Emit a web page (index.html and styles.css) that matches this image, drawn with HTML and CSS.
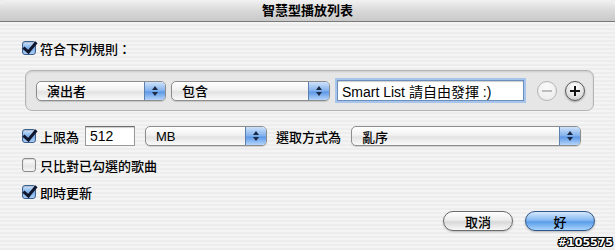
FILE: index.html
```html
<!DOCTYPE html>
<html lang="zh-Hant">
<head>
    <meta charset="UTF-8">
    <title>智慧型播放列表</title>
    <link rel="stylesheet" href="styles.css">
</head>
<body>
    <div id="dialog">
        <div class="titlebar">智慧型播放列表</div>
        <div class="content">
            <div class="row first">
                <span class="check on"></span>
                <span class="label">符合下列規則：</span>
            </div>

            <div class="rulebox">
                <div class="popup w-field">
                    <span>演出者</span><span class="stepper"></span>
                </div>
                <div class="popup w-op">
                    <span>包含</span><span class="stepper"></span>
                </div>
                <input type="text" class="field focus" value="Smart List 請自由發揮 :)">
                <span class="round minus dim"></span>
                <span class="round plus"></span>
            </div>

            <div class="row limit">
                <span class="check on"></span>
                <span class="label">上限為</span>
                <input type="text" class="field num" value="512">
                <div class="popup w-unit">
                    <span>MB</span><span class="stepper"></span>
                </div>
                <span class="label pick">選取方式為</span>
                <div class="popup w-order">
                    <span>亂序</span><span class="stepper"></span>
                </div>
            </div>

            <div class="row only">
                <span class="check"></span>
                <span class="label">只比對已勾選的歌曲</span>
            </div>

            <div class="row live">
                <span class="check on"></span>
                <span class="label">即時更新</span>
            </div>

            <div class="buttons">
                <button class="btn">取消</button>
                <button class="btn default">好</button>
            </div>
        </div>
        <div class="stamp">#105575</div>
    </div>
</body>
</html>
```

FILE: styles.css
```css
* {
    box-sizing: border-box;
}

body {
    margin: 0;
    font-family: "Liberation Sans", "Noto Sans CJK TC", sans-serif;
    font-size: 13px;
    color: #000;
}

#dialog {
    position: relative;
    width: 615px;
    height: 250px;
    overflow: hidden;
    background: repeating-linear-gradient(to bottom, #ededed 0, #ededed 2px, #f4f4f4 2px, #f4f4f4 4px);
}

.titlebar {
    height: 22px;
    line-height: 21px;
    text-align: center;
    font-weight: bold;
    font-size: 13px;
    background: linear-gradient(to bottom, #f2f2f2, #d9d9d9 50%, #c9c9c9);
    border-bottom: 1px solid #7a7a7a;
    border-radius: 5px 5px 0 0;
}

.content {
    padding: 0 20px 0 22px;
}

.row {
    display: flex;
    align-items: center;
    height: 18px;
}

.row.first {
    margin-top: 17px;
}

.label {
    margin-left: 4px;
    font-weight: 500;
    white-space: nowrap;
}

.check {
    width: 14px;
    height: 14px;
    flex: none;
    border: 1px solid #8a8a8a;
    border-radius: 3px;
    background: linear-gradient(to bottom, #ffffff, #e6e6e6 60%, #f6f6f6);
    box-shadow: inset 0 1px 1px rgba(0, 0, 0, 0.15);
    position: relative;
}

.check.on {
    border-color: #3c5f8d;
    background: linear-gradient(to bottom, #d4e5fa, #7eaee8 50%, #a8ccf4);
}

.check.on::after {
    content: "";
    position: absolute;
    left: 3px;
    top: -3px;
    width: 5px;
    height: 11px;
    border: solid #101830;
    border-width: 0 3px 3px 0;
    transform: rotate(40deg);
}

.rulebox {
    display: flex;
    align-items: center;
    margin: 13px 0 0 3px;
    width: 569px;
    height: 41px;
    padding-left: 10px;
    border: 1px solid #b4b4b4;
    border-radius: 7px;
    background: #e6e6e6;
    box-shadow: inset 0 1px 2px rgba(0, 0, 0, 0.12);
}

.popup {
    display: flex;
    align-items: center;
    justify-content: space-between;
    height: 20px;
    padding-left: 10px;
    border: 1px solid #8d8d8d;
    border-radius: 5px;
    background: linear-gradient(to bottom, #ffffff, #f1f1f1 45%, #e2e2e2 55%, #fafafa);
    box-shadow: 0 1px 1px rgba(0, 0, 0, 0.15);
    font-weight: 500;
    overflow: hidden;
}

.stepper {
    position: relative;
    width: 21px;
    height: 18px;
    border-left: 1px solid #5c7fae;
    background: linear-gradient(to bottom, #cfe2fb, #7fb0ec 50%, #5b97e6 55%, #b6d5fa);
}

.stepper::before,
.stepper::after {
    content: "";
    position: absolute;
    left: 7px;
    border-left: 3px solid transparent;
    border-right: 3px solid transparent;
}

.stepper::before {
    top: 4px;
    border-bottom: 4px solid #1a2a44;
}

.stepper::after {
    top: 10px;
    border-top: 4px solid #1a2a44;
}

.w-field {
    width: 130px;
}

.w-op {
    width: 159px;
    margin-left: 5px;
}

.field {
    height: 21px;
    padding: 0 4px;
    border: 1px solid #9a9a9a;
    border-top-color: #6f6f6f;
    background: #fff;
    font-family: "Liberation Sans", "Noto Sans CJK TC", sans-serif;
    font-size: 14px;
    color: #000;
    outline: none;
    box-shadow: inset 0 1px 1px rgba(0, 0, 0, 0.2);
}

.field.focus {
    width: 187px;
    margin-left: 7px;
    border-color: #6d8fbd;
    box-shadow: 0 0 0 2px #a7c5ea, inset 0 1px 1px rgba(0, 0, 0, 0.2);
}

.round {
    position: relative;
    width: 20px;
    height: 20px;
    flex: none;
    margin-left: 8px;
    border: 1px solid #5a5a5a;
    border-radius: 50%;
    background: radial-gradient(circle at 50% 30%, #ffffff, #e0e0e0 60%, #b8b8b8);
    box-shadow: 0 1px 2px rgba(0, 0, 0, 0.3);
}

.round::before,
.round.plus::after {
    content: "";
    position: absolute;
    left: 4px;
    top: 8px;
    width: 10px;
    height: 2px;
    background: #111;
}

.round.plus::after {
    left: 8px;
    top: 4px;
    width: 2px;
    height: 10px;
}

.round.dim {
    margin-left: 13px;
    border-color: #b4b4b4;
    box-shadow: none;
    background: radial-gradient(circle at 50% 30%, #fafafa, #e9e9e9);
}

.round.dim::before {
    background: #bcbcbc;
}

.row.limit {
    margin-top: 15px;
    height: 20px;
}

.field.num {
    width: 50px;
    height: 20px;
    margin-left: 6px;
}

.w-unit {
    width: 122px;
    margin-left: 10px;
}

.label.pick {
    margin-left: 9px;
}

.w-order {
    width: 230px;
    margin-left: 10px;
}

.row.only {
    margin-top: 10px;
}

.row.live {
    margin-top: 9px;
}

.buttons {
    display: flex;
    justify-content: flex-end;
    gap: 12px;
    margin-top: 10px;
}

.btn {
    width: 70px;
    height: 20px;
    padding: 0;
    border: 1px solid #6b6b6b;
    border-radius: 10px;
    background: linear-gradient(to bottom, #ffffff, #ececec 45%, #d8d8d8 55%, #f8f8f8);
    box-shadow: 0 1px 2px rgba(0, 0, 0, 0.25);
    font-family: "Liberation Sans", "Noto Sans CJK TC", sans-serif;
    font-size: 13px;
    font-weight: 500;
    color: #000;
}

.btn.default {
    border-color: #2f5789;
    background: linear-gradient(to bottom, #d6e8fd, #86b9f1 45%, #5a9de8 55%, #a9d4fc);
}

.stamp {
    position: absolute;
    right: 2px;
    bottom: 1px;
    font-family: "DejaVu Sans", sans-serif;
    font-size: 11px;
    font-weight: bold;
    color: #fff;
    text-shadow: 1px 0 0 #000, -1px 0 0 #000, 0 1px 0 #000, 0 -1px 0 #000, 1px 1px 0 #000, -1px -1px 0 #000, 1px -1px 0 #000, -1px 1px 0 #000;
}
```
